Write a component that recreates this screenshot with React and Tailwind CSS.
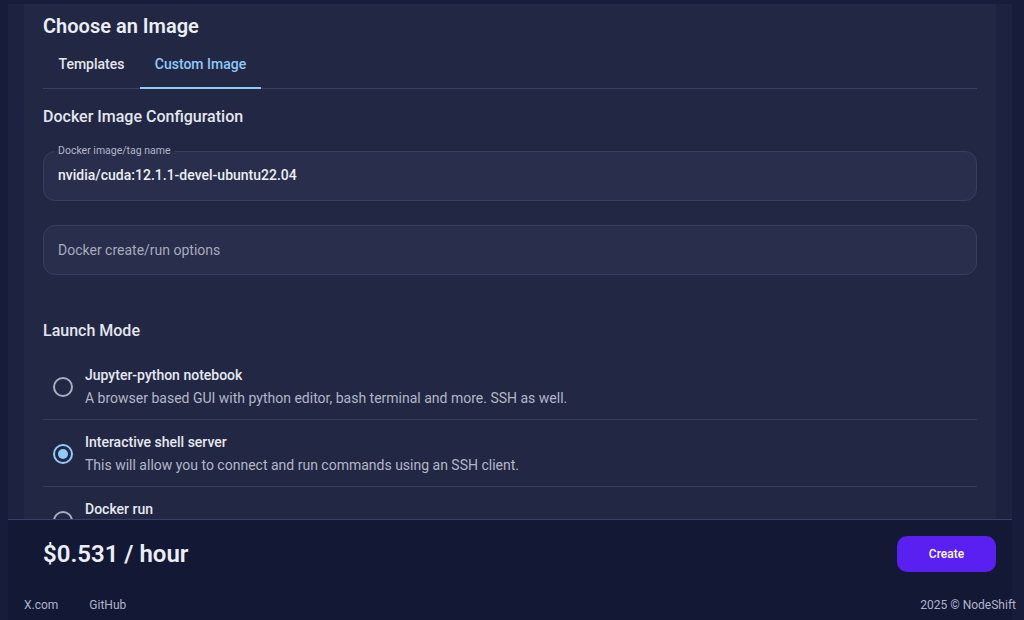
import React from "react";

function Radio({ checked }) {
  return checked ? (
    <div className="flex h-5 w-5 shrink-0 items-center justify-center rounded-full border-2 border-[#90caf9]">
      <div className="h-[10px] w-[10px] rounded-full bg-[#90caf9]" />
    </div>
  ) : (
    <div className="h-5 w-5 shrink-0 rounded-full border-2 border-[#a9adbf]" />
  );
}

function ModeRow({ title, desc, checked }) {
  return (
    <div className="flex items-center border-b border-[#353b5a] pt-3 pb-[11px]">
      <div className="ml-[10px] mr-3">
        <Radio checked={checked} />
      </div>
      <div>
        <div className="text-[14px] font-medium leading-5 text-[#e6e8f1]">{title}</div>
        {desc ? <div className="mt-[3px] text-[14px] leading-5 text-[#b3b6c8]">{desc}</div> : <div className="h-[23px]" />}
      </div>
    </div>
  );
}

export default function App() {
  return (
    <div
      className="flex h-[620px] w-[1024px] flex-col overflow-hidden bg-[#161c3a]"
      style={{ fontFamily: "Roboto, 'Noto Sans', sans-serif" }}
    >
      <div className="min-h-0 flex-1 overflow-hidden pl-2 pr-3 pt-1">
        <div className="h-full bg-[#1c2240] px-4">
          <div className="h-full bg-[#222843] px-[19px] pt-[8px]">
            <h1 className="text-[20px] font-semibold leading-[28px] text-[#eceef5]">Choose an Image</h1>
            <div className="flex h-[49px] border-b border-[#3a4062] text-[14px] font-medium">
              <div className="flex w-[97px] items-center justify-center text-[#e4e6ef]">Templates</div>
              <div className="relative flex w-[121px] items-center justify-center text-[#90caf9]">
                Custom Image
                <div className="absolute bottom-[-1px] left-0 h-[2px] w-full bg-[#90caf9]" />
              </div>
            </div>

            <h2 className="mt-[16px] text-[16px] font-medium leading-6 text-[#e4e6ef]">Docker Image Configuration</h2>

            <fieldset className="mt-4 rounded-xl border border-[#383e5c] bg-[#282e4b] px-[14px] pb-[15px]">
              <legend className="-ml-1 px-1 text-[10.5px] leading-[12px] text-[#b3b6c8]">Docker image/tag name</legend>
              <div className="pt-[8px] text-[14px] font-medium leading-5 text-[#eceef5]">nvidia/cuda:12.1.1-devel-ubuntu22.04</div>
            </fieldset>

            <div className="mt-6 flex h-[50px] items-center rounded-xl border border-[#383e5c] bg-[#282e4b] px-[14px] text-[14px] text-[#a7abbe]">
              Docker create/run options
            </div>

            <h2 className="mt-[44px] text-[16px] font-medium leading-6 text-[#e4e6ef]">Launch Mode</h2>

            <div className="mt-[10px]">
              <ModeRow
                title="Jupyter-python notebook"
                desc="A browser based GUI with python editor, bash terminal and more. SSH as well."
              />
              <ModeRow
                checked
                title="Interactive shell server"
                desc="This will allow you to connect and run commands using an SSH client."
              />
              <ModeRow title="Docker run" />
            </div>
          </div>
        </div>
      </div>

      <div className="ml-2 mr-3 h-[101px] shrink-0 border-t border-[#383e6e] bg-[#131935]">
        <div className="flex items-center justify-between pl-[35px] pr-4 pt-4">
          <div className="text-[24px] font-semibold text-[#eceef5]">$0.531 / hour</div>
          <button className="h-9 w-[99px] rounded-[10px] bg-[#5a20f2] text-[12px] font-medium text-white">Create</button>
        </div>
        <div className="mt-[25px] flex items-center justify-between pl-4 text-[12px] leading-4 text-[#b0b4c8]">
          <div className="flex gap-[31px]">
            <span>X.com</span>
            <span>GitHub</span>
          </div>
          <span className="-mr-1">2025 © NodeShift</span>
        </div>
      </div>
    </div>
  );
}
